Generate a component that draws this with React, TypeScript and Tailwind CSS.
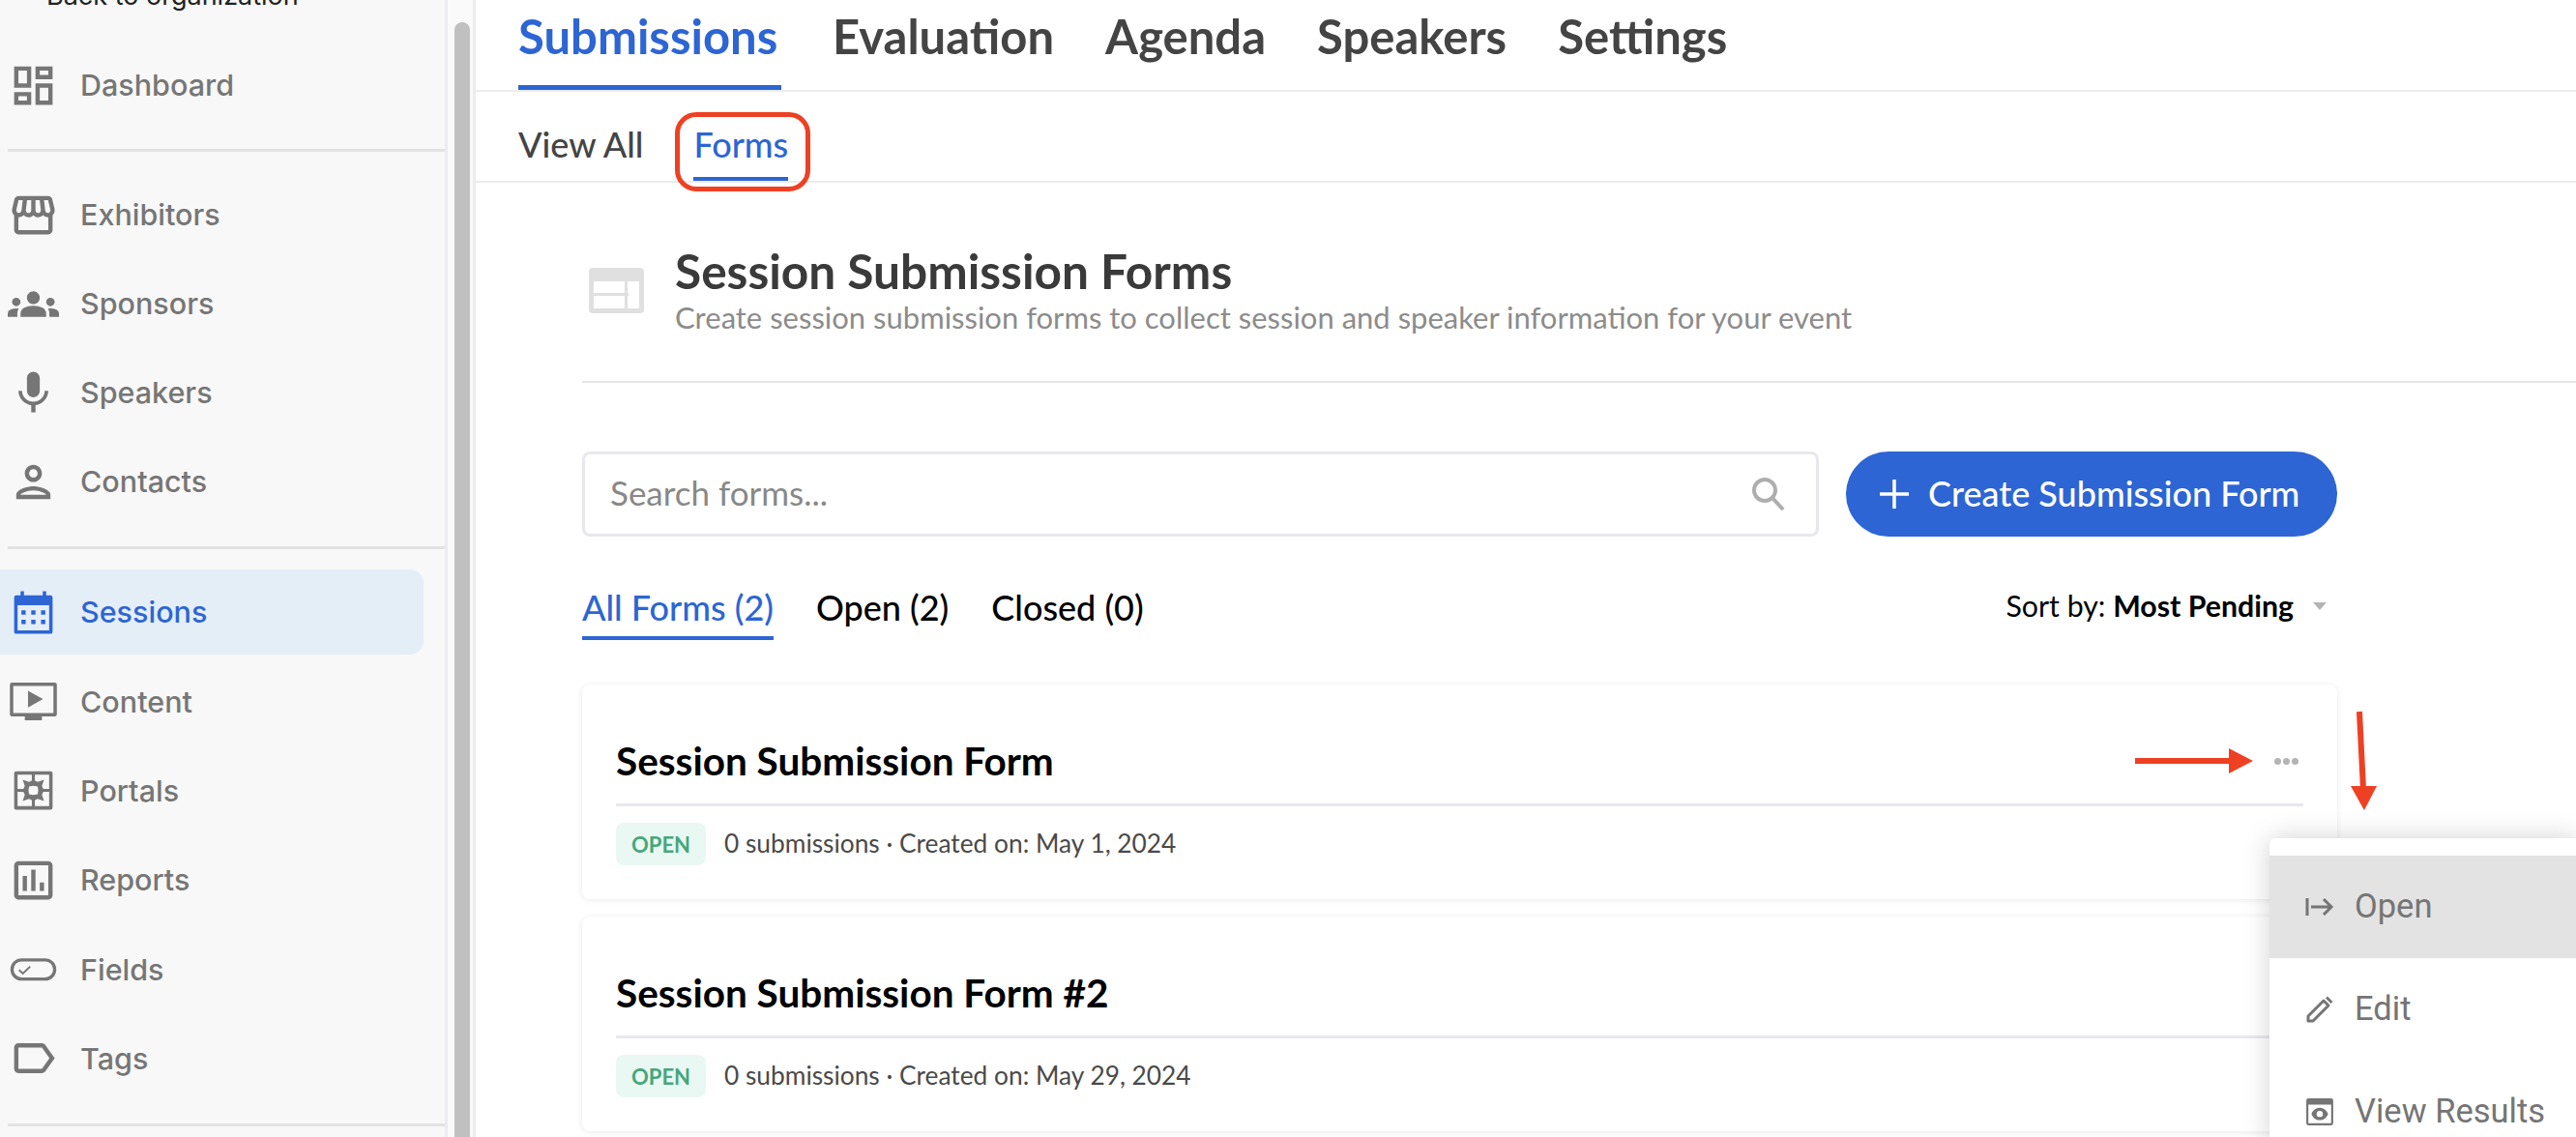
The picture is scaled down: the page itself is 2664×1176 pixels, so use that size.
import type { ReactNode } from 'react'
import { MdOutlineDashboard, MdOutlineStorefront, MdGroups, MdMic, MdOutlinePerson, MdOutlineAssessment, MdLabelOutline } from 'react-icons/md'

const Icon = ({ children }: { children: ReactNode }) => (
    <svg viewBox="0 0 24 24" className="w-[53px] h-[53px] shrink-0" fill="currentColor">{children}</svg>
)

const CalendarIcon = () => (
    <Icon>
        <path fillRule="evenodd" d="M6 2h1.6v2h8.8V2H18v2h2a1 1 0 0 1 1 1v16a1 1 0 0 1-1 1H4a1 1 0 0 1-1-1V5a1 1 0 0 1 1-1h2V2zM4.6 8.6V20.4h14.8V8.6H4.6z" />
        <path d="M6.4 11h2v2h-2zM11 11h2v2h-2zM15.6 11h2v2h-2zM6.4 15.4h2v2h-2zM11 15.4h2v2h-2zM15.6 15.4h2v2h-2z" />
    </Icon>
)

const ContentIcon = () => (
    <Icon>
        <path fillRule="evenodd" d="M2 3.2h20a1 1 0 0 1 1 1V18a1 1 0 0 1-1 1H2a1 1 0 0 1-1-1V4.200a1 1 0 0 1 1-1zM2.600 4.800v12.600h18.800V4.800H2.600z" />
        <path d="M9.500 7l7 3.900-7 3.900zM8 19h8v1.800H8z" />
    </Icon>
)

const PortalsIcon = () => (
    <Icon>
        <path fillRule="evenodd" d="M4 3h16a1 1 0 0 1 1 1v16a1 1 0 0 1-1 1H4a1 1 0 0 1-1-1V4a1 1 0 0 1 1-1zm.600 1.600v14.800h14.800V4.600H4.600z" />
        <path fillRule="evenodd" d="M7 7l3 1 2-1 2 1 3-1-1 3 1 2-1 2 1 3-3-1-2 1-2-1-3 1 1-3-1-2 1-2zM10 10.200L9.700 12l.3 1.800 2 .4 2-.4.3-1.800-.3-1.800-2-.4z" />
        <path d="M11.300 4h1.400v4h-1.400zM11.300 16h1.400v4h-1.400zM4 11.300h4v1.400H4zM16 11.300h4v1.400h-4z" />
    </Icon>
)

const FieldsIcon = () => (
    <Icon>
        <rect x="2" y="7.600" width="20" height="9" rx="4.500" fill="none" stroke="currentColor" strokeWidth="1.500" />
        <path d="M5.300 12.300l1.800 1.700 3.400-3.300" fill="none" stroke="currentColor" strokeWidth="0.900" />
    </Icon>
)

const NavItem = ({ icon, label, active }: { icon: ReactNode; label: string; active?: boolean }) => (
    <div className={`flex items-center gap-[22px] pl-[8px] h-[88px] w-[438px] rounded-r-[14px] text-[30.5px] font-medium ${active ? 'bg-[#e4eef7] text-[#2d65d4]' : 'text-[#767676]'}`}>
        {icon}
        <span>{label}</span>
    </div>
)

const Divider = () => <div className="ml-[8px] h-[3px] bg-[#e2e2e2]" />

const Sidebar = () => (
    <aside className="w-[460px] shrink-0 bg-[#f8f8f8] font-['Inter',sans-serif]">
        <div className="h-[58px] -mt-[14px] pl-[48px] text-[27px] text-[#222] leading-[20px]">Back to organization</div>
        <NavItem icon={<MdOutlineDashboard className="w-[53px] h-[53px] shrink-0" />} label="Dashboard" />
        <div className="h-[22px]" />
        <Divider />
        <div className="h-[21px]" />
        <div className="flex flex-col gap-[4px]">
            <NavItem icon={<MdOutlineStorefront className="w-[53px] h-[53px] shrink-0" />} label="Exhibitors" />
            <NavItem icon={<MdGroups className="w-[53px] h-[53px] shrink-0" />} label="Sponsors" />
            <NavItem icon={<MdMic className="w-[53px] h-[53px] shrink-0" />} label="Speakers" />
            <NavItem icon={<MdOutlinePerson className="w-[53px] h-[53px] shrink-0" />} label="Contacts" />
        </div>
        <div className="h-[23px]" />
        <Divider />
        <div className="h-[21px]" />
        <div className="flex flex-col gap-[4.4px]">
            <NavItem icon={<CalendarIcon />} label="Sessions" active />
            <NavItem icon={<ContentIcon />} label="Content" />
            <NavItem icon={<PortalsIcon />} label="Portals" />
            <NavItem icon={<MdOutlineAssessment className="w-[53px] h-[53px] shrink-0" />} label="Reports" />
            <NavItem icon={<FieldsIcon />} label="Fields" />
            <NavItem icon={<MdLabelOutline className="w-[53px] h-[53px] shrink-0" />} label="Tags" />
        </div>
        <div className="h-[23px]" />
        <Divider />
    </aside>
)

const Scrollbar = () => (
    <div className="w-[32px] shrink-0 bg-[#fafafa] border-l-[3px] border-r-[3px] border-[#ececf0] pl-[7px] pt-[23px]">
        <div className="w-[16px] h-[1200px] rounded-full bg-[#c0c0c0]" />
    </div>
)

const FormCard = ({ title, created }: { title: string; created: string }) => (
    <div className="w-[1815px] h-[222px] rounded-[8px] bg-white shadow-[0_1px_6px_rgba(0,0,0,0.09)] px-[35px] pt-[55px]">
        <div className="h-[71px] border-b-[3px] border-[#e8e8ee] flex justify-between">
            <div className="text-[40.500px] leading-[47px] font-bold text-black">{title}</div>
            <div className="flex gap-[2px] pt-[21px] pr-[5px] h-[10px]">
                <span className="w-[7px] h-[7px] rounded-full bg-[#b4b4b4]" />
                <span className="w-[7px] h-[7px] rounded-full bg-[#b4b4b4]" />
                <span className="w-[7px] h-[7px] rounded-full bg-[#b4b4b4]" />
            </div>
        </div>
        <div className="flex items-center gap-[19px] mt-[17px]">
            <span className="w-[93px] h-[44px] rounded-[8px] bg-[#e9f8f2] text-[#47a67c] text-[22px] font-bold flex items-center justify-center">OPEN</span>
            <span className="text-[26.300px] text-[#4a4a4a]">0 submissions · Created on: {created}</span>
        </div>
    </div>
)

const MenuRow = ({ icon, label, active }: { icon: ReactNode; label: string; active?: boolean }) => (
    <div className={`flex items-center gap-[21px] pl-[37px] h-[106px] text-[34.500px] font-['Roboto',sans-serif] text-[#757575] ${active ? 'bg-[#e3e3e3]' : ''}`}>
        {icon}
        <span>{label}</span>
    </div>
)

export default function App() {
    return (
        <div className="relative flex w-[2664px] h-[1176px] overflow-hidden bg-white font-['Lato',sans-serif]">
            <Sidebar />
            <Scrollbar />
            <main className="flex-1">
                <div className="h-[95px] border-b-[2px] border-[#ebebf0] flex gap-[53px] pl-[44px] text-[49px] font-bold text-[#444]">
                    <div className="h-[93px] w-[272px] border-b-[5px] border-[#2d65d4] text-[#2d65d4] leading-[74px] whitespace-nowrap">Submissions</div>
                    <div className="leading-[74px]">Evaluation</div>
                    <div className="leading-[74px]">Agenda</div>
                    <div className="leading-[74px]">Speakers</div>
                    <div className="leading-[74px]">Settings</div>
                </div>
                <div className="h-[94px] border-b-[2px] border-[#ebebf0] flex gap-[52px] pl-[44px] text-[36px] font-medium">
                    <div className="text-[#444] leading-[108px]">View All</div>
                    <div className="h-[92px] border-b-[4px] border-[#2d65d4] text-[#2d65d4] leading-[108px]">Forms</div>
                </div>
                <div className="pl-[110px]">
                    <div className="flex items-center gap-[32px] h-[207px] w-[2062px] border-b-[2px] border-[#e4e4e4] pt-[18px]">
                        <svg viewBox="0 0 57 47" className="w-[57px] h-[47px] ml-[7px] shrink-0">
                            <rect width="57" height="47" rx="4" fill="#e0e0e0" />
                            <rect x="5" y="14" width="47" height="28" fill="#fff" />
                            <rect x="5" y="26" width="36" height="3" fill="#e0e0e0" />
                            <rect x="37" y="14" width="3" height="28" fill="#e0e0e0" />
                        </svg>
                        <div>
                            <h1 className="text-[49.600px] leading-[54px] font-bold text-[#3a3a3a]">Session Submission Forms</h1>
                            <p className="text-[31px] leading-[42px] text-[#8c8c8c]">Create session submission forms to collect session and speaker information for your event</p>
                        </div>
                    </div>
                    <div className="flex gap-[28px] mt-[71px] w-[1815px]">
                        <div className="flex-1 h-[88px] rounded-[8px] border-[3px] border-[#e8e8ec] flex items-center justify-between pl-[26px] pr-[32px]">
                            <span className="text-[35px] leading-[42px] pb-[4px] text-[#888]">Search forms...</span>
                            <svg viewBox="0 0 34 34" className="w-[34px] h-[34px]" fill="none" stroke="#aeaeae" strokeWidth="4">
                                <circle cx="13" cy="13" r="11" />
                                <path d="M21 21l11 12" />
                            </svg>
                        </div>
                        <button className="w-[508px] h-[88px] rounded-full bg-[#2d65d4] text-white text-[36px] font-medium flex items-center gap-[20px] pl-[35px]">
                            <svg viewBox="0 0 30 30" className="w-[30px] h-[30px]" fill="none" stroke="#fff" strokeWidth="3.500">
                                <path d="M15 0v30M0 15h30" />
                            </svg>
                            <span className="pb-[2px]">Create Submission Form</span>
                        </button>
                    </div>
                    <div className="flex items-start justify-between w-[1815px] mt-[47px] h-[106px]">
                        <div className="flex gap-[44px] text-[36px] font-medium text-black">
                            <div className="h-[60px] border-b-[4px] border-[#2d65d4] text-[#2d65d4] leading-[52px]">All Forms (2)</div>
                            <div className="leading-[52px]">Open (2)</div>
                            <div className="leading-[52px]">Closed (0)</div>
                        </div>
                        <div className="flex items-center gap-[20px] pr-[11px] h-[50px] text-[30.300px] text-black">
                            <span>Sort by: <span className="font-bold">Most Pending</span></span>
                            <span className="w-0 h-0 border-x-[7px] border-x-transparent border-t-[8px] border-t-[#b4b4b4]" />
                        </div>
                    </div>
                    <div className="flex flex-col gap-[18px]">
                        <FormCard title="Session Submission Form" created="May 1, 2024" />
                        <FormCard title="Session Submission Form #2" created="May 29, 2024" />
                    </div>
                </div>
            </main>

            {/* annotations on top of the screenshot */}
            <div className="absolute left-[698px] top-[116px] w-[140px] h-[82px] rounded-[22px] border-[5px] border-[#ee4023]" />
            <svg className="absolute left-[2200px] top-[730px] w-[270px] h-[115px]" viewBox="0 0 270 115">
                <path d="M8 57h100" stroke="#ee4023" strokeWidth="6" />
                <path d="M105 44l25 13-25 13z" fill="#ee4023" />
                <path d="M240 6l4 80" stroke="#ee4023" strokeWidth="6" />
                <path d="M231 83h27l-13 25z" fill="#ee4023" />
            </svg>

            <div className="absolute left-[2347px] top-[867px] w-[320px] h-[320px] rounded-tl-[6px] bg-white pt-[18px] shadow-[0_0_28px_rgba(0,0,0,0.18)]">
                <MenuRow
                    active
                    label="Open"
                    icon={
                        <svg viewBox="0 0 30 20" className="w-[30px] h-[20px]" fill="none" stroke="#757575" strokeWidth="3">
                            <path d="M2 1v18M6 10h21M19 2l8 8-8 8" />
                        </svg>
                    }
                />
                <MenuRow
                    label="Edit"
                    icon={
                        <svg viewBox="0 0 30 30" className="w-[30px] h-[30px]">
                            <path d="M3 22L19 6l5 5L8 27H3z" fill="none" stroke="#757575" strokeWidth="3" strokeLinejoin="round" />
                            <path d="M21 3.500l2-2 5.500 5.500-2 2z" fill="#757575" />
                        </svg>
                    }
                />
                <MenuRow
                    label="View Results"
                    icon={
                        <svg viewBox="0 0 28 28" className="w-[30px] h-[30px]" fill="#757575">
                            <path fillRule="evenodd" d="M3 1h22a2 2 0 0 1 2 2v22a2 2 0 0 1-2 2H3a2 2 0 0 1-2-2V3a2 2 0 0 1 2-2zm0 6v18h22V7H3z" />
                            <path fillRule="evenodd" d="M14 10c4 0 7 3 8 6-1 3-4 6-8 6s-7-3-8-6c1-3 4-6 8-6zm0 3a3 3 0 1 0 0 6 3 3 0 0 0 0-6z" />
                        </svg>
                    }
                />
            </div>
        </div>
    )
}
